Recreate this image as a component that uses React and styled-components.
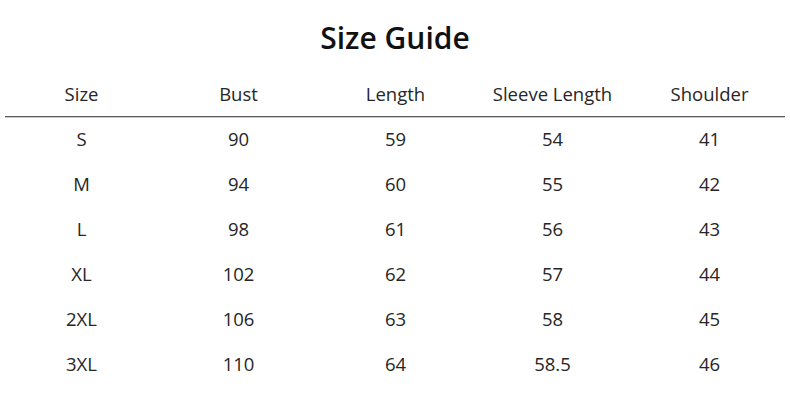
import React from 'react';
import styled, { createGlobalStyle } from 'styled-components';

const GlobalStyle = createGlobalStyle`
  body {
    margin: 0;
    background: #fff;
    font-family: "Open Sans", "Noto Sans", sans-serif;
  }
`;

const Page = styled.div`
  width: 790px;
  height: 400px;
  background: #fff;
  color: #222;
`;

const Title = styled.h1`
  margin: 0;
  padding-top: 19px;
  height: 53px;
  font-size: 30px;
  line-height: 38px;
  font-weight: 600;
  text-align: center;
  color: #111;
`;

const Row = styled.div`
  display: grid;
  grid-template-columns: repeat(5, 157px);
  padding-left: 3px;
  box-sizing: border-box;
  height: ${(p) => (p.$head ? '44px' : '45px')};
  padding-bottom: ${(p) => (p.$head ? '0' : '2px')};
  align-items: center;
`;

const Cell = styled.div`
  text-align: center;
  font-size: 18.5px;
  line-height: 24px;
  color: #262626;
`;

const Divider = styled.div`
  margin: 0 5px;
  height: 1px;
  background: #5c5c5c;
  box-shadow: 0 0.5px 0 #9a9a9a;
`;

const head = ['Size', 'Bust', 'Length', 'Sleeve Length', 'Shoulder'];
const rows = [
  ['S', '90', '59', '54', '41'],
  ['M', '94', '60', '55', '42'],
  ['L', '98', '61', '56', '43'],
  ['XL', '102', '62', '57', '44'],
  ['2XL', '106', '63', '58', '45'],
  ['3XL', '110', '64', '58.5', '46'],
];

export default function App() {
  return (
    <Page>
      <GlobalStyle />
      <Title>Size Guide</Title>
      <Row $head>
        {head.map((h) => (
          <Cell key={h}>{h}</Cell>
        ))}
      </Row>
      <Divider />
      {rows.map((r) => (
        <Row key={r[0]}>
          {r.map((c, i) => (
            <Cell key={i}>{c}</Cell>
          ))}
        </Row>
      ))}
    </Page>
  );
}
